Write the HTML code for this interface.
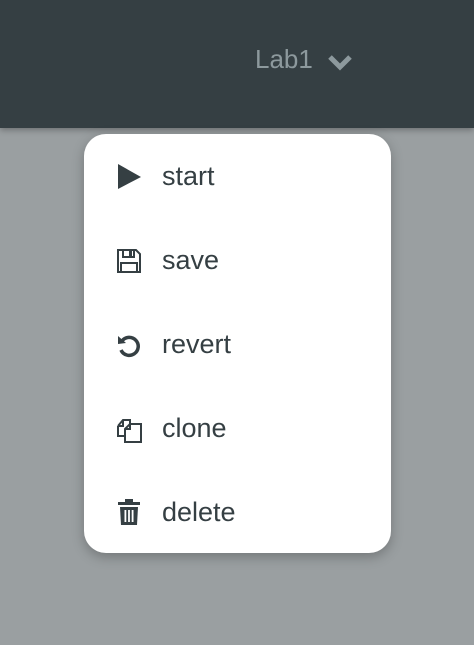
<!DOCTYPE html>
<html><head><style>
body{margin:0;width:474px;height:645px;overflow:hidden;background:#9a9fa1;font-family:"Liberation Sans",sans-serif;position:relative}
.hdr{position:absolute;left:0;top:0;width:474px;height:128px;background:#353f43;box-shadow:0 2px 6px rgba(0,0,0,.3)}
.lab{position:absolute;left:255px;top:44px;font-size:26px;color:#8d999d}
.menu{position:absolute;left:84px;top:134px;width:307px;height:419px;background:#fff;border-radius:22px;box-shadow:0 4px 12px rgba(0,0,0,.25)}
.it{position:absolute;left:78px;font-size:27px;color:#353f43;line-height:30px}
svg.i{position:absolute;left:32px}
</style></head><body>
<div class="hdr"><div class="lab">Lab1</div>
<svg style="position:absolute;left:327px;top:53px" width="26" height="18" viewBox="0 0 26 18"><path d="M3 4 L13 14 L23 4" stroke="#8d999d" stroke-width="5" fill="none"/></svg></div>
<div class="menu">
<svg class="i" style="top:30px" width="26" height="26"><path d="M2 0 L25 13 L2 25Z" fill="#353f43"/></svg>
<div class="it" style="top:27px">start</div>
<svg class="i" style="top:114px" width="26" height="26"><path d="M2 2 H20 L24 6 V24 H2Z M7 2 V9 H18 V2 M5 24 V15 H21 V24" fill="none" stroke="#353f43" stroke-width="2"/><rect x="13" y="3" width="3" height="5" fill="#353f43"/></svg>
<div class="it" style="top:111px">save</div>
<svg class="i" style="top:199px" width="26" height="26"><path d="M6 8 A9 9 0 1 1 5 17" fill="none" stroke="#353f43" stroke-width="3.5"/><path d="M2 3 L10 10 L2 11Z" fill="#353f43"/></svg>
<div class="it" style="top:195px">revert</div>
<svg class="i" style="top:282px" width="28" height="28"><path d="M2 10 L7 4 H14 V10 M2 10 V20 H9 M2 10 H7 V4" fill="none" stroke="#353f43" stroke-width="2"/><path d="M9 13 L14 8 H25 V26 H9Z M9 13 H14 V8" fill="none" stroke="#353f43" stroke-width="2"/></svg>
<div class="it" style="top:279px">clone</div>
<svg class="i" style="top:365px" width="26" height="28"><rect x="2" y="3" width="22" height="3" fill="#353f43"/><rect x="9" y="0" width="8" height="4" fill="#353f43"/><path d="M4 8 H22 L21 26 H5Z" fill="#353f43"/><rect x="8.5" y="11" width="1.8" height="12" fill="#fff"/><rect x="12.1" y="11" width="1.8" height="12" fill="#fff"/><rect x="15.7" y="11" width="1.8" height="12" fill="#fff"/></svg>
<div class="it" style="top:363px">delete</div>
</div>
</body></html>
